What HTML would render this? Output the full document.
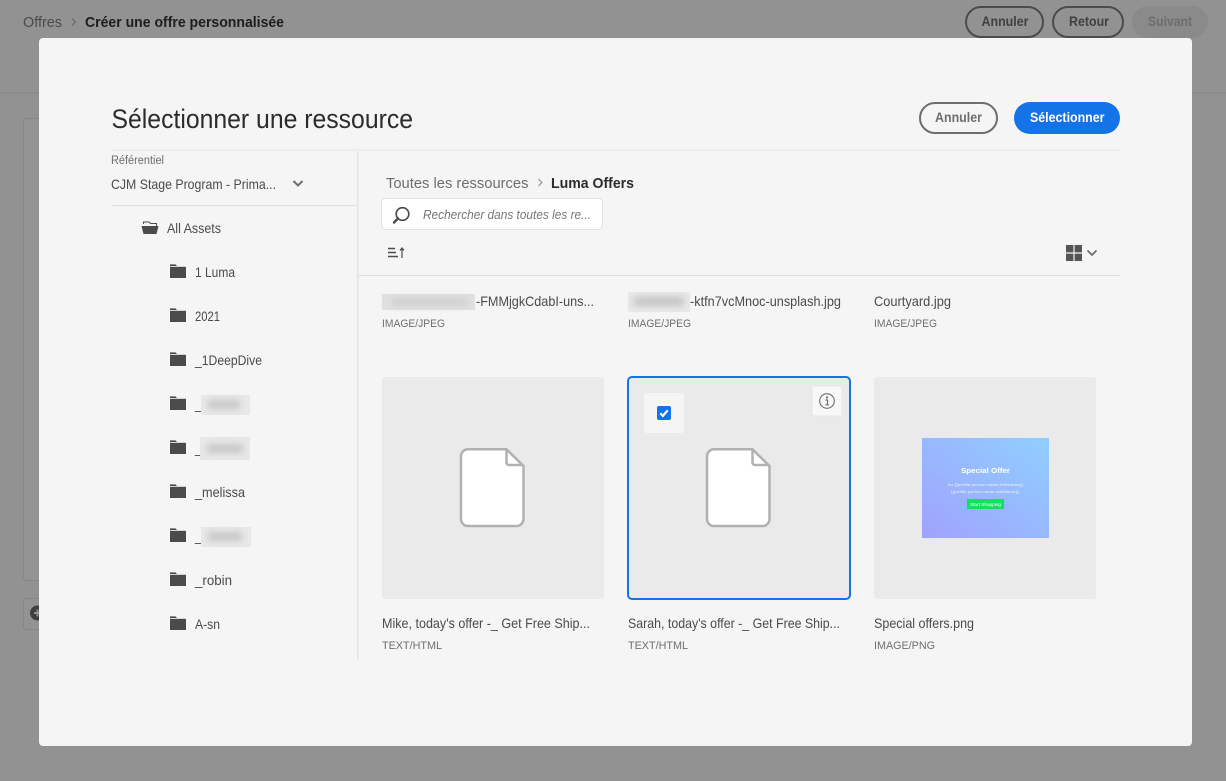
<!DOCTYPE html>
<html lang="fr"><head><meta charset="utf-8"><title>Sélectionner une ressource</title>
<style>
html,body{margin:0;padding:0;background:#929292;width:1226px;height:781px;overflow:hidden}
svg{display:block}
text{font-family:"Liberation Sans",sans-serif;white-space:pre}
</style></head><body>
<svg width="1226" height="781" viewBox="0 0 1226 781" xmlns="http://www.w3.org/2000/svg">
<defs>
<filter id="b" x="-50%" y="-150%" width="200%" height="400%"><feGaussianBlur stdDeviation="3.500"/></filter>
<filter id="s" x="-10%" y="-30%" width="120%" height="160%"><feGaussianBlur stdDeviation=".25"/></filter>
<linearGradient id="g" x1="0" y1="1" x2="1" y2="0"><stop offset="0" stop-color="#a0a2fe"/><stop offset="1" stop-color="#90cfff"/></linearGradient>
<g id="fd"><path d="M0 2V.4H5.500L7 2z" fill="#4b4b4b"/><path d="M0 2.800H16V14H0z" fill="#4b4b4b"/></g>
<g id="doc"><path d="M8.500 1.300H47L64 18V71a7 7 0 0 1-7 7H8.500a7 7 0 0 1-7-7V8.300a7 7 0 0 1 7-7z" fill="#fff" stroke="#b1b1b1" stroke-width="2.500" transform="translate(-.5 0)"/><path d="M46.500 2V14.500a2.500 2.500 0 0 0 2.500 2.500H63" fill="none" stroke="#b1b1b1" stroke-width="2.500"/></g>
</defs>

<rect width="1226" height="781" fill="#929292"/>
<rect x="0" y="92" width="1226" height="1.500" fill="#8a8a8a"/>
<rect x="23.500" y="118.500" width="300" height="462" rx="3" fill="#939393" stroke="#868686"/>
<rect x="23.500" y="598.500" width="100" height="31" rx="3" fill="#939393" stroke="#868686"/>
<circle cx="37.500" cy="613" r="7.500" fill="#3f3f3f"/><path d="M37.500 609.500v7M34 613h7" stroke="#929292" stroke-width="2"/>

<text x="23" y="27" font-size="15" fill="#4a4a4a" textLength="39" lengthAdjust="spacingAndGlyphs">Offres</text>
<path d="M72 18.500l3.500 3.500-3.500 3.500" fill="none" stroke="#6e6e6e" stroke-width="1.300"/>
<text x="85" y="27" font-size="15" font-weight="700" fill="#1d1d1d" textLength="199" lengthAdjust="spacingAndGlyphs">Créer une offre personnalisée</text>

<rect x="966" y="7" width="77" height="30" rx="15" fill="none" stroke="#4b4b4b" stroke-width="2"/>
<text x="981.500" y="26" font-size="14" font-weight="700" fill="#404040" textLength="47" lengthAdjust="spacingAndGlyphs">Annuler</text>
<rect x="1053" y="7" width="70" height="30" rx="15" fill="none" stroke="#4b4b4b" stroke-width="2"/>
<text x="1069" y="26" font-size="14" font-weight="700" fill="#404040" textLength="40" lengthAdjust="spacingAndGlyphs">Retour</text>
<rect x="1132" y="6" width="76" height="32" rx="16" fill="#8a8a8a"/>
<text x="1148" y="26" font-size="14" font-weight="700" fill="#6d6d6d" textLength="44" lengthAdjust="spacingAndGlyphs">Suivant</text>

<rect x="39" y="38" width="1153" height="708" rx="4" fill="#f5f5f5"/>

<text x="111.500" y="128" font-size="27" fill="#2c2c2c" textLength="301.500" lengthAdjust="spacingAndGlyphs">Sélectionner une ressource</text>
<rect x="920" y="103" width="77" height="30" rx="15" fill="none" stroke="#6e6e6e" stroke-width="2"/>
<text x="935" y="122" font-size="14" font-weight="700" fill="#6e6e6e" textLength="47" lengthAdjust="spacingAndGlyphs">Annuler</text>
<rect x="1014" y="102" width="106" height="32" rx="16" fill="#1473e6"/>
<text x="1030" y="122" font-size="14" font-weight="700" fill="#fff" textLength="74.500" lengthAdjust="spacingAndGlyphs">Sélectionner</text>

<rect x="111" y="149" width="1009" height="2" fill="#ededed"/>
<rect x="357" y="151" width="1.500" height="508" fill="#e4e4e4"/>

<text x="111" y="164" font-size="11.500" fill="#6e6e6e" textLength="53" lengthAdjust="spacingAndGlyphs">Référentiel</text>
<text x="111" y="189" font-size="14" fill="#4b4b4b" textLength="165" lengthAdjust="spacingAndGlyphs">CJM Stage Program - Prima...</text>
<path d="M293.500 181l4.500 4.500 4.500-4.500" fill="none" stroke="#6e6e6e" stroke-width="2"/>
<rect x="111" y="205" width="246" height="1" fill="#e1e1e1"/>

<g transform="translate(141 220)"><path d="M2.500 4V2h5.500l1.500 1.500h6V6" fill="none" stroke="#4b4b4b" stroke-width="1"/><path d="M.5 6H17.500L15.500 14H2.500z" fill="#4b4b4b"/></g>
<text x="167" y="233" font-size="14" fill="#4b4b4b" textLength="54" lengthAdjust="spacingAndGlyphs">All Assets</text>

<use href="#fd" x="170" y="264"/><text x="195" y="277" font-size="14" fill="#4b4b4b" textLength="40" lengthAdjust="spacingAndGlyphs">1 Luma</text>
<use href="#fd" x="170" y="308"/><text x="195" y="321" font-size="14" fill="#4b4b4b" textLength="25" lengthAdjust="spacingAndGlyphs">2021</text>
<use href="#fd" x="170" y="352"/><text x="195" y="365" font-size="14" fill="#4b4b4b" textLength="67" lengthAdjust="spacingAndGlyphs">_1DeepDive</text>
<use href="#fd" x="170" y="396"/><text x="195" y="409" font-size="14" fill="#4b4b4b">_</text>
<rect x="201" y="395" width="49" height="20" fill="#e8e8e8"/><rect x="208" y="400" width="32" height="9" fill="#c8c8c8" filter="url(#b)"/>
<use href="#fd" x="170" y="440"/><text x="195" y="453" font-size="14" fill="#4b4b4b">_</text>
<rect x="200" y="437" width="50" height="23" fill="#e8e8e8"/><rect x="207" y="444" width="36" height="9" fill="#c8c8c8" filter="url(#b)"/>
<use href="#fd" x="170" y="484"/><text x="195" y="497" font-size="14" fill="#4b4b4b" textLength="50" lengthAdjust="spacingAndGlyphs">_melissa</text>
<use href="#fd" x="170" y="528"/><text x="195" y="541" font-size="14" fill="#4b4b4b">_</text>
<rect x="201" y="527" width="50" height="20" fill="#e8e8e8"/><rect x="208" y="532" width="34" height="9" fill="#c8c8c8" filter="url(#b)"/>
<use href="#fd" x="170" y="572"/><text x="195" y="585" font-size="14" fill="#4b4b4b" textLength="37" lengthAdjust="spacingAndGlyphs">_robin</text>
<use href="#fd" x="170" y="616"/><text x="195" y="629" font-size="14" fill="#4b4b4b" textLength="25" lengthAdjust="spacingAndGlyphs">A-sn</text>

<text x="386" y="188" font-size="15" fill="#6e6e6e" textLength="142.500" lengthAdjust="spacingAndGlyphs">Toutes les ressources</text>
<path d="M538.500 179l3.500 3.500-3.500 3.500" fill="none" stroke="#a0a0a0" stroke-width="1.300"/>
<text x="551" y="188" font-size="15" font-weight="700" fill="#2c2c2c" textLength="83" lengthAdjust="spacingAndGlyphs">Luma Offers</text>

<rect x="381.500" y="198.500" width="221" height="31" rx="4" fill="#fff" stroke="#e1e1e1"/>
<circle cx="402.500" cy="214" r="6.300" fill="none" stroke="#4b4b4b" stroke-width="1.700"/>
<path d="M398 218.500L394 222.500" stroke="#4b4b4b" stroke-width="2.400" stroke-linecap="round"/>
<text x="423" y="219" font-size="13" font-style="italic" fill="#767676" textLength="168" lengthAdjust="spacingAndGlyphs">Rechercher dans toutes les re...</text>

<path d="M388 248.500h7M388 252.500h8M388 256.500h10" stroke="#4b4b4b" stroke-width="1.500"/>
<path d="M402 258v-9.500M400 250.500l2-2.500 2 2.500" fill="none" stroke="#4b4b4b" stroke-width="1.200"/>

<path d="M1066 245h7.400v7.400h-7.400zM1074.600 245h7.400v7.400h-7.400zM1066 253.600h7.400v7.400h-7.400zM1074.600 253.600h7.400v7.400h-7.400z" fill="#555"/>
<path d="M1087.500 250.500l4.500 4.500 4.500-4.500" fill="none" stroke="#6e6e6e" stroke-width="1.800"/>
<rect x="358" y="275" width="762" height="1" fill="#e1e1e1"/>

<rect x="382" y="294" width="93" height="16" fill="#e0e0e0"/><rect x="392" y="298" width="76" height="8" fill="#d0d0d0" filter="url(#b)"/>
<text x="476" y="306" font-size="14" fill="#4b4b4b" textLength="118" lengthAdjust="spacingAndGlyphs">-FMMjgkCdabI-uns...</text>
<text x="382" y="327" font-size="11" fill="#6e6e6e" textLength="63" lengthAdjust="spacingAndGlyphs">IMAGE/JPEG</text>

<rect x="628" y="292" width="62" height="20" fill="#e8e8e8"/><rect x="634" y="297" width="50" height="9" fill="#c4c4c4" filter="url(#b)"/>
<text x="690" y="306" font-size="14" fill="#4b4b4b" textLength="151" lengthAdjust="spacingAndGlyphs">-ktfn7vcMnoc-unsplash.jpg</text>
<text x="628" y="327" font-size="11" fill="#6e6e6e" textLength="63" lengthAdjust="spacingAndGlyphs">IMAGE/JPEG</text>

<text x="874" y="306" font-size="14" fill="#4b4b4b" textLength="77" lengthAdjust="spacingAndGlyphs">Courtyard.jpg</text>
<text x="874" y="327" font-size="11" fill="#6e6e6e" textLength="63" lengthAdjust="spacingAndGlyphs">IMAGE/JPEG</text>

<rect x="382" y="377" width="222" height="222" rx="3" fill="#eaeaea"/>
<use href="#doc" x="460" y="448"/>
<text x="382" y="628" font-size="14" fill="#4b4b4b" textLength="208" lengthAdjust="spacingAndGlyphs">Mike, today's offer -_ Get Free Ship...</text>
<text x="382" y="649" font-size="11" fill="#6e6e6e" textLength="60" lengthAdjust="spacingAndGlyphs">TEXT/HTML</text>

<rect x="628" y="377" width="222" height="222" rx="4" fill="#eaeaea" stroke="#1473e6" stroke-width="2"/>
<use href="#doc" x="706" y="448"/>
<rect x="644" y="393" width="40" height="40" rx="3" fill="#f5f5f5"/>
<rect x="657" y="406" width="14" height="14" rx="2" fill="#1473e6"/>
<path d="M660.300 413.300l2.600 2.600 4.800-5.600" fill="none" stroke="#fff" stroke-width="2.200"/>
<rect x="812" y="386" width="30" height="30" rx="2" fill="#f8f8f8" stroke="#e6e6e6"/>
<circle cx="827" cy="401" r="7.300" fill="none" stroke="#6e6e6e" stroke-width="1.100"/>
<circle cx="827" cy="397.500" r="1.100" fill="#6e6e6e"/>
<path d="M825.500 400h2v4.500M825.300 404.800h3.500" fill="none" stroke="#6e6e6e" stroke-width="1.200"/>
<text x="628" y="628" font-size="14" fill="#4b4b4b" textLength="212" lengthAdjust="spacingAndGlyphs">Sarah, today's offer -_ Get Free Ship...</text>
<text x="628" y="649" font-size="11" fill="#6e6e6e" textLength="60" lengthAdjust="spacingAndGlyphs">TEXT/HTML</text>

<rect x="874" y="377" width="222" height="222" rx="3" fill="#eaeaea"/>
<rect x="922" y="438" width="127" height="100" fill="url(#g)"/>
<text x="961" y="473" font-size="7.500" font-weight="700" fill="#fff" textLength="49" lengthAdjust="spacingAndGlyphs" filter="url(#s)">Special Offer</text>
<text x="948" y="486" font-size="4" fill="#eef" textLength="75" lengthAdjust="spacingAndGlyphs" filter="url(#s)">for {{profile.person.name.firstName}}</text>
<text x="951" y="493" font-size="4" fill="#eef" textLength="69" lengthAdjust="spacingAndGlyphs" filter="url(#s)">{{profile.person.name.lastName}},</text>
<rect x="967" y="499" width="37" height="10" fill="#14e060"/>
<text x="970" y="506" font-size="4.500" fill="#fff" textLength="31" lengthAdjust="spacingAndGlyphs" filter="url(#s)">Start Shopping</text>
<text x="874" y="628" font-size="14" fill="#4b4b4b" textLength="100" lengthAdjust="spacingAndGlyphs">Special offers.png</text>
<text x="874" y="649" font-size="11" fill="#6e6e6e" textLength="61" lengthAdjust="spacingAndGlyphs">IMAGE/PNG</text>
</svg>
</body></html>
